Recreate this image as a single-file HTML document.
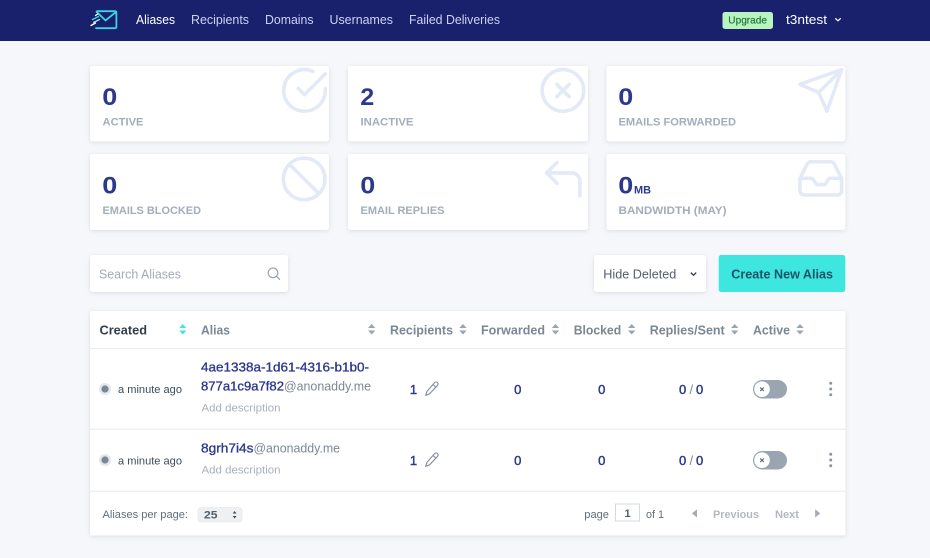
<!DOCTYPE html>
<html lang="en"><head><meta charset="utf-8"><title>Aliases</title>
<style>
html,body{margin:0;padding:0;width:930px;height:558px;overflow:hidden;background:#f5f7fa}
svg{display:block;filter:blur(.3px)}
text{font-family:"Liberation Sans",sans-serif;white-space:pre}
.nav{font-size:13px;fill:#cbd2f5}
.num{font-size:24px;font-weight:700;fill:#2d3a8c}
.lab{font-size:11px;font-weight:700;fill:#a3adbb}
.card{fill:#fff;filter:drop-shadow(0 1px 2px rgba(40,50,70,.13))}
.ic{fill:none;stroke:#e4e9f7;stroke-width:1.7;stroke-linecap:round;stroke-linejoin:round}
.th{font-size:13px;font-weight:700;fill:#7b8794}
.tri{fill:#9aa5b1}
.ago{font-size:11px;fill:#3e4c59}
.al{font-size:13px;fill:#2d3a8c;stroke:#2d3a8c;stroke-width:.35}
.dom{font-size:13px;fill:#7b8794}
.desc{font-size:11px;fill:#a8b0bb}
.v{font-size:13px;fill:#2d3a8c;stroke:#2d3a8c;stroke-width:.45;text-anchor:middle}
.f{font-size:11px;fill:#616e7c}
.d{font-size:11px;font-weight:700;fill:#b4b9c0}
.pen{fill:none;stroke:#8a94a2;stroke-width:1.2;stroke-linejoin:round}
</style></head>
<body>
<svg width="930" height="558" viewBox="0 0 930 558" xmlns="http://www.w3.org/2000/svg">
<rect width="930" height="558" fill="#f5f7fa"/>
<rect width="930" height="41" fill="#19216c"/>

<!-- logo -->
<g fill="none" stroke="#3fd3e0" stroke-width="1.8" stroke-linecap="round" stroke-linejoin="round">
<path d="M97 11.2H115.2a1.2 1.2 0 0 1 1.2 1.2V27a1.2 1.2 0 0 1-1.2 1.2H96"/>
<path d="M96.5 11.8L105.5 20.4L116 12"/>
<path d="M95.5 15.5L97.8 14" stroke="#fff" stroke-width="1.3"/>
<path d="M92.5 19.5L98.5 16.5" stroke-width="1.4"/>
<path d="M93.5 22.5L99.5 19.5" stroke="#9fe8ee" stroke-width="1.3"/>
<path d="M91 25.5L95.5 23" stroke="#fff" stroke-width="1.3"/>
</g>

<!-- nav -->
<text class="nav" x="136" y="24.2" textLength="39" lengthAdjust="spacingAndGlyphs" style="fill:#fff">Aliases</text>
<text class="nav" x="191" y="24.2" textLength="58" lengthAdjust="spacingAndGlyphs">Recipients</text>
<text class="nav" x="265" y="24.2" textLength="48.5" lengthAdjust="spacingAndGlyphs">Domains</text>
<text class="nav" x="329.5" y="24.2" textLength="63.5" lengthAdjust="spacingAndGlyphs">Usernames</text>
<text class="nav" x="409" y="24.2" textLength="91" lengthAdjust="spacingAndGlyphs">Failed Deliveries</text>

<rect x="722.5" y="12" width="50.5" height="17" rx="2.5" fill="#b9f3c0"/>
<text x="728.3" y="23.5" font-size="10.5" fill="#207a3a" stroke="#207a3a" stroke-width=".2" textLength="38.7" lengthAdjust="spacingAndGlyphs">Upgrade</text>
<text x="786" y="24.2" font-size="13" fill="#fff" textLength="41" lengthAdjust="spacingAndGlyphs">t3ntest</text>
<path d="M835.3 18.3L838 20.8L840.7 18.3" fill="none" stroke="#fff" stroke-width="1.3"/>

<!-- cards -->
<rect class="card" x="90" y="66" width="239" height="75.5" rx="2.5"/>
<rect class="card" x="348" y="66" width="240" height="75.5" rx="2.5"/>
<rect class="card" x="606.5" y="66" width="238.8" height="75.5" rx="2.5"/>
<rect class="card" x="90" y="154" width="239" height="76" rx="2.5"/>
<rect class="card" x="348" y="154" width="240" height="76" rx="2.5"/>
<rect class="card" x="606.5" y="154" width="238.8" height="76" rx="2.5"/>

<g class="ic" transform="translate(279.5 65.5) scale(2.08)"><path d="M22 11.08V12a10 10 0 1 1-5.93-9.14"/><path d="M22 4L12 14.01l-3-3"/></g>
<g class="ic" transform="translate(538 65.5) scale(2.08)"><circle cx="12" cy="12" r="10"/><path d="M15 9l-6 6M9 9l6 6"/></g>
<g class="ic" transform="translate(795.8 65.5) scale(2.08)"><path d="M22 2L11 13"/><path d="M22 2L15 22L11 13L2 9Z"/></g>
<g class="ic" transform="translate(279.2 154) scale(2.08)"><circle cx="12" cy="12" r="10"/><path d="M4.93 4.93l14.14 14.14"/></g>
<g class="ic" transform="translate(538.3 154.2) scale(2.08)"><path d="M9 14L4 9L9 4"/><path d="M20 20v-7a4 4 0 0 0-4-4H4"/></g>
<g class="ic" transform="translate(795.8 153.4) scale(2.08)"><path d="M22 12H16L14 15H10L8 12H2"/><path d="M5.45 5.11L2 12v6a2 2 0 0 0 2 2h16a2 2 0 0 0 2-2v-6l-3.45-6.89A2 2 0 0 0 16.76 4H7.24a2 2 0 0 0-1.79 1.11z"/></g>

<text class="num" x="102.3" y="105" textLength="15" lengthAdjust="spacingAndGlyphs">0</text>
<text class="lab" x="102.5" y="125.6" textLength="41" lengthAdjust="spacingAndGlyphs">ACTIVE</text>
<text class="num" x="360.3" y="105" textLength="14" lengthAdjust="spacingAndGlyphs">2</text>
<text class="lab" x="360.5" y="125.6" textLength="53" lengthAdjust="spacingAndGlyphs">INACTIVE</text>
<text class="num" x="618.3" y="105" textLength="15" lengthAdjust="spacingAndGlyphs">0</text>
<text class="lab" x="618.5" y="125.6" textLength="117.5" lengthAdjust="spacingAndGlyphs">EMAILS FORWARDED</text>
<text class="num" x="102.3" y="193.3" textLength="15" lengthAdjust="spacingAndGlyphs">0</text>
<text class="lab" x="102.5" y="214" textLength="98.5" lengthAdjust="spacingAndGlyphs">EMAILS BLOCKED</text>
<text class="num" x="360.3" y="193.3" textLength="15" lengthAdjust="spacingAndGlyphs">0</text>
<text class="lab" x="360.5" y="214" textLength="84" lengthAdjust="spacingAndGlyphs">EMAIL REPLIES</text>
<text class="num" x="618.3" y="193.3" textLength="15" lengthAdjust="spacingAndGlyphs">0</text>
<text x="634" y="193.3" font-size="11" font-weight="700" fill="#2d3a8c" textLength="17" lengthAdjust="spacingAndGlyphs">MB</text>
<text class="lab" x="618.5" y="214" textLength="108" lengthAdjust="spacingAndGlyphs">BANDWIDTH (MAY)</text>

<!-- controls -->
<rect class="card" x="90" y="255" width="198" height="37" rx="2.5"/>
<text x="99" y="278.3" font-size="12.5" fill="#a3abb7" textLength="82" lengthAdjust="spacingAndGlyphs">Search Aliases</text>
<g fill="none" stroke="#9aa5b1" stroke-width="1.2" stroke-linecap="round"><circle cx="273" cy="272.8" r="4.8"/><path d="M276.6 276.4L279.6 279.4"/></g>

<rect class="card" x="594" y="255" width="112" height="37" rx="2.5"/>
<text x="603.3" y="278.3" font-size="13" fill="#52606d" textLength="73" lengthAdjust="spacingAndGlyphs">Hide Deleted</text>
<path d="M690.8 272.6L693.5 275.2L696.2 272.6" fill="none" stroke="#323f4b" stroke-width="1.3"/>

<rect x="718.7" y="255" width="126.6" height="37" rx="2.5" fill="#3de6df"/>
<text x="731.3" y="278.3" font-size="13" font-weight="700" fill="#1d5365" textLength="101.7" lengthAdjust="spacingAndGlyphs">Create New Alias</text>

<!-- table -->
<rect class="card" x="90" y="311" width="755.5" height="224.5" rx="2"/>
<rect x="90" y="348" width="755.5" height="1" fill="#e8ebf0"/>
<rect x="90" y="428.5" width="755.5" height="1.5" fill="#eef0f4"/>
<rect x="90" y="490.5" width="755.5" height="1.5" fill="#eef0f4"/>

<text class="th" x="99.5" y="334.3" textLength="47.5" lengthAdjust="spacingAndGlyphs" style="fill:#323f4b">Created</text>
<text class="th" x="201" y="334.3" textLength="29" lengthAdjust="spacingAndGlyphs">Alias</text>
<text class="th" x="390" y="334.3" textLength="63" lengthAdjust="spacingAndGlyphs">Recipients</text>
<text class="th" x="481" y="334.3" textLength="64" lengthAdjust="spacingAndGlyphs">Forwarded</text>
<text class="th" x="573.7" y="334.3" textLength="47.5" lengthAdjust="spacingAndGlyphs">Blocked</text>
<text class="th" x="649.7" y="334.3" textLength="75" lengthAdjust="spacingAndGlyphs">Replies/Sent</text>
<text class="th" x="753" y="334.3" textLength="37" lengthAdjust="spacingAndGlyphs">Active</text>

<path d="M179.3 328L182.8 324L186.3 328ZM179.3 330.5L182.8 334.5L186.3 330.5Z" fill="#3de6df"/>
<path class="tri" d="M368 328L371.7 324L375.4 328ZM368 330.5L371.7 334.5L375.4 330.5Z"/>
<path class="tri" d="M459.3 328L463 324L466.7 328ZM459.3 330.5L463 334.5L466.7 330.5Z"/>
<path class="tri" d="M551.8 328L555.5 324L559.2 328ZM551.8 330.5L555.5 334.5L559.2 330.5Z"/>
<path class="tri" d="M628 328L631.7 324L635.4 328ZM628 330.5L631.7 334.5L635.4 330.5Z"/>
<path class="tri" d="M731 328L734.7 324L738.4 328ZM731 330.5L734.7 334.5L738.4 330.5Z"/>
<path class="tri" d="M796.3 328L800 324L803.7 328ZM796.3 330.5L800 334.5L803.7 330.5Z"/>

<!-- row 1 -->
<circle cx="105" cy="389" r="6" fill="#e3e7ef"/><circle cx="105" cy="389" r="3.6" fill="#7b8794"/>
<text class="ago" x="118" y="393" textLength="64" lengthAdjust="spacingAndGlyphs">a minute ago</text>
<text class="al" x="201" y="371.7" textLength="168" lengthAdjust="spacingAndGlyphs">4ae1338a-1d61-4316-b1b0-</text>
<text class="al" x="201" y="390.7" textLength="83" lengthAdjust="spacingAndGlyphs">877a1c9a7f82</text>
<text class="dom" x="284" y="390.7" textLength="87" lengthAdjust="spacingAndGlyphs">@anonaddy.me</text>
<text class="desc" x="201.5" y="411.3" textLength="79" lengthAdjust="spacingAndGlyphs">Add description</text>
<text class="v" x="413.5" y="394">1</text>
<g><path class="pen" d="M434.6 382.6a1.9 1.9 0 0 1 3 0.2a1.9 1.9 0 0 1-0.1 2.6L429.5 393.8L425.6 395.4L427 391.4Z"/><path class="pen" d="M433 384.4L436 387.3"/></g>
<text class="v" x="517.7" y="393.8">0</text>
<text class="v" x="601.8" y="393.8">0</text>
<text class="v" x="679" y="393.8" style="text-anchor:start" textLength="8">0</text>
<text x="689.5" y="393.8" font-size="13" fill="#7b8794">/</text>
<text class="v" x="696" y="393.8" style="text-anchor:start" textLength="8">0</text>
<rect x="753" y="380" width="34" height="18.5" rx="9.2" fill="#9aa5b1"/>
<circle cx="762" cy="389.2" r="8.3" fill="#fff" stroke="#9aa5b1" stroke-width="1"/>
<path d="M760.2 387.5L763.8 391M763.8 387.5L760.2 391" stroke="#52606d" stroke-width="1.1" fill="none"/>
<g fill="#8a95a2"><circle cx="830.7" cy="383.3" r="1.5"/><circle cx="830.7" cy="389" r="1.5"/><circle cx="830.7" cy="394.7" r="1.5"/></g>

<!-- row 2 -->
<circle cx="105" cy="460" r="6" fill="#e3e7ef"/><circle cx="105" cy="460" r="3.6" fill="#7b8794"/>
<text class="ago" x="118" y="464.3" textLength="64" lengthAdjust="spacingAndGlyphs">a minute ago</text>
<text class="al" x="201" y="452.7" textLength="52.5" lengthAdjust="spacingAndGlyphs">8grh7i4s</text>
<text class="dom" x="253.5" y="452.7" textLength="86.5" lengthAdjust="spacingAndGlyphs">@anonaddy.me</text>
<text class="desc" x="201.5" y="473.5" textLength="79" lengthAdjust="spacingAndGlyphs">Add description</text>
<text class="v" x="413.5" y="465">1</text>
<g transform="translate(0 71)"><path class="pen" d="M434.6 382.6a1.9 1.9 0 0 1 3 0.2a1.9 1.9 0 0 1-0.1 2.6L429.5 393.8L425.6 395.4L427 391.4Z"/><path class="pen" d="M433 384.4L436 387.3"/></g>
<text class="v" x="517.7" y="464.8">0</text>
<text class="v" x="601.8" y="464.8">0</text>
<text class="v" x="679" y="464.8" style="text-anchor:start" textLength="8">0</text>
<text x="689.5" y="464.8" font-size="13" fill="#7b8794">/</text>
<text class="v" x="696" y="464.8" style="text-anchor:start" textLength="8">0</text>
<rect x="753" y="451" width="34" height="18.5" rx="9.2" fill="#9aa5b1"/>
<circle cx="762" cy="460.2" r="8.3" fill="#fff" stroke="#9aa5b1" stroke-width="1"/>
<path d="M760.2 458.5L763.8 462M763.8 458.5L760.2 462" stroke="#52606d" stroke-width="1.1" fill="none"/>
<g fill="#8a95a2"><circle cx="830.7" cy="454.3" r="1.5"/><circle cx="830.7" cy="460" r="1.5"/><circle cx="830.7" cy="465.7" r="1.5"/></g>

<!-- footer -->
<text class="f" x="102.5" y="518.2" textLength="85.5" lengthAdjust="spacingAndGlyphs">Aliases per page:</text>
<rect x="198" y="507.5" width="44" height="14.5" rx="3" fill="#eef0f2" stroke="#e2e4e8" stroke-width=".6"/>
<text x="204" y="518.5" font-size="11" font-weight="700" fill="#52606d" textLength="13.5" lengthAdjust="spacingAndGlyphs">25</text>
<path d="M232.7 513.5L234.6 511L236.5 513.5ZM232.7 516L234.6 518.5L236.5 516Z" fill="#3e4c59"/>

<text class="f" x="584.3" y="518.2" textLength="24.7" lengthAdjust="spacingAndGlyphs">page</text>
<rect x="615.5" y="504" width="24" height="17" fill="#fff" stroke="#d6d9de" stroke-width="1"/>
<text x="627.5" y="517" font-size="11" font-weight="700" fill="#52606d" text-anchor="middle">1</text>
<text class="f" x="646" y="518.2" textLength="18" lengthAdjust="spacingAndGlyphs">of 1</text>
<path d="M697 509.3V517.5L692 513.4Z" fill="#a3abb5"/>
<text class="d" x="713" y="518" textLength="46" lengthAdjust="spacingAndGlyphs">Previous</text>
<text class="d" x="775" y="518" textLength="24" lengthAdjust="spacingAndGlyphs">Next</text>
<path d="M815.2 509.3V517.5L820.2 513.4Z" fill="#a3abb5"/>
</svg>
</body></html>
